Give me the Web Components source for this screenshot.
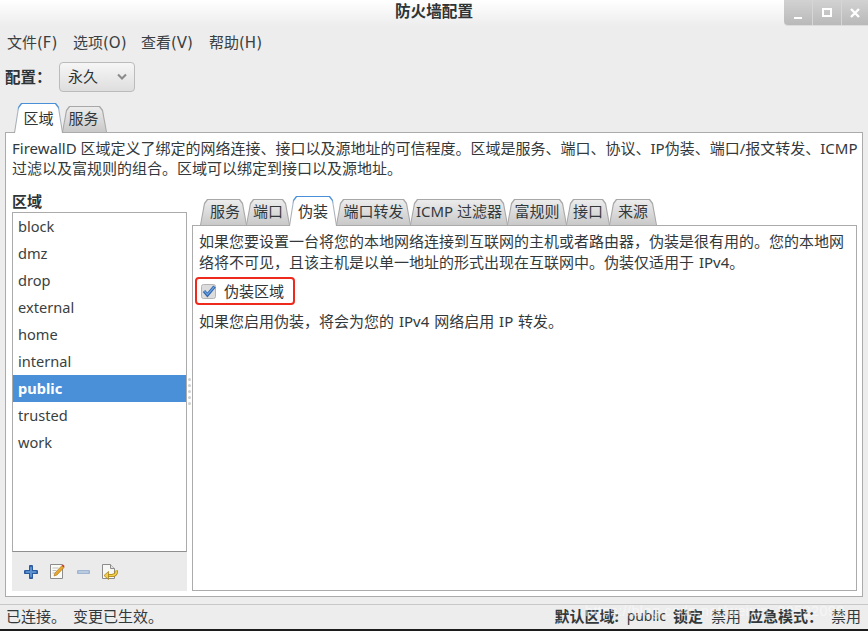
<!DOCTYPE html>
<html lang="zh">
<head>
<meta charset="utf-8">
<title>防火墙配置</title>
<style>
  html, body { margin: 0; height: 100%; overflow: hidden; }
  body {
    background: #ededed;
    color: #2e3436;
    font: 15px/20px "Noto Sans", "Noto Sans CJK SC", sans-serif;
  }
</style>
</head>
<body>
<fw-window>
  <fw-titlebar slot="title">防火墙配置</fw-titlebar>
  <fw-menubar slot="menu">
    <fw-menu style="width:66px">文件(F)</fw-menu>
    <fw-menu style="width:68px">选项(O)</fw-menu>
    <fw-menu style="width:68px">查看(V)</fw-menu>
    <fw-menu>帮助(H)</fw-menu>
  </fw-menubar>
  <fw-config slot="config" label="配置：" value="永久"></fw-config>

  <fw-tabrow slot="tabs" inset="9">
    <fw-tab active style="width:49px">区域</fw-tab>
    <fw-tab style="width:45px;margin-left:-1px;padding-right:2px">服务</fw-tab>
  </fw-tabrow>

  <fw-panel slot="panel">
    <fw-text slot="desc">FirewallD 区域定义了绑定的网络连接、接口以及源地址的可信程度。区域是服务、端口、协议、IP伪装、端口/报文转发、ICMP<br>过滤以及富规则的组合。区域可以绑定到接口以及源地址。</fw-text>

    <fw-zones slot="zones" heading="区域">
      <fw-zone>block</fw-zone>
      <fw-zone>dmz</fw-zone>
      <fw-zone>drop</fw-zone>
      <fw-zone>external</fw-zone>
      <fw-zone>home</fw-zone>
      <fw-zone>internal</fw-zone>
      <fw-zone selected>public</fw-zone>
      <fw-zone>trusted</fw-zone>
      <fw-zone>work</fw-zone>
      <fw-zone-tools slot="tools"></fw-zone-tools>
    </fw-zones>

    <fw-notebook slot="detail">
      <fw-tabrow slot="tabs" inset="8">
        <fw-tab style="width:47px;padding-left:3px">服务</fw-tab>
        <fw-tab style="width:44px;margin-left:-1px">端口</fw-tab>
        <fw-tab active style="width:48px;margin-left:-1px">伪装</fw-tab>
        <fw-tab style="width:75px;margin-left:-1px">端口转发</fw-tab>
        <fw-tab style="width:98px;margin-left:-1px">ICMP 过滤器</fw-tab>
        <fw-tab style="width:60px;margin-left:-1px">富规则</fw-tab>
        <fw-tab style="width:44px;margin-left:-1px">接口</fw-tab>
        <fw-tab style="width:48px;margin-left:-1px">来源</fw-tab>
      </fw-tabrow>
      <p>如果您要设置一台将您的本地网络连接到互联网的主机或者路由器，伪装是很有用的。您的本地网<br>络将不可见，且该主机是以单一地址的形式出现在互联网中。伪装仅适用于 IPv4。</p>
      <fw-check>伪装区域</fw-check>
      <p class="after">如果您启用伪装，将会为您的 IPv4 网络启用 IP 转发。</p>
    </fw-notebook>
  </fw-panel>

  <fw-status slot="status">
    <span>已连接。 变更已生效。</span>
    <fw-status-item slot="right" name="默认区域:" value="public" latin></fw-status-item>
    <fw-status-item slot="right" name="锁定" value="禁用"></fw-status-item>
    <fw-status-item slot="right" name="应急模式：" value="禁用"></fw-status-item>
  </fw-status>
</fw-window>

<script>
  // small helper so every element below is just a template + a define
  function comp(name, html, extra) {
    const tpl = document.createElement('template');
    tpl.innerHTML = html;
    const cls = class extends HTMLElement {
      constructor() {
        super();
        this.attachShadow({ mode: 'open' }).appendChild(tpl.content.cloneNode(true));
      }
      connectedCallback() {
        if (extra) extra.call(this, this.shadowRoot);
      }
    };
    customElements.define(name, cls);
  }

  comp('fw-window', `
    <style>
      :host { display: flex; flex-direction: column; height: 631px; box-sizing: border-box; border-bottom: 2px solid #1c1c1c; }
      .tabs { margin: 7px 5px 0; height: 29px; }
      .panel { flex: 1; min-height: 0; display: flex; margin: 0 5px 7px; }
    </style>
    <slot name="title"></slot>
    <slot name="menu"></slot>
    <slot name="config"></slot>
    <div class="tabs"><slot name="tabs"></slot></div>
    <div class="panel"><slot name="panel"></slot></div>
    <slot name="status"></slot>
  `);

  comp('fw-titlebar', `
    <style>
      :host { display: grid; grid-template-columns: 1fr auto 1fr; height: 26px; background: linear-gradient(#fff, #f6f6f6 50%, #ededed); }
      .t { grid-column: 2; font-size: 15.6px; font-weight: 700; line-height: 23px; }
      .btns { grid-column: 3; justify-self: end; display: flex; height: 25px; border-bottom-left-radius: 4px; overflow: hidden; background: linear-gradient(#d2d2d2, #b9b9b9); box-shadow: 0 1px 0 #dcdcdc; }
      .b { width: 28px; display: flex; align-items: center; justify-content: center; border-left: 1px solid #d6d6d6; }
      .b:first-child { border-left: 0; }
      svg { width: 12px; height: 12px; }
    </style>
    <div class="t"><slot></slot></div>
    <div class="btns">
      <div class="b"><svg viewBox="0 0 12 12"><rect x="2" y="10" width="8" height="2" fill="#fff"/></svg></div>
      <div class="b"><svg viewBox="0 0 12 12"><rect x="2" y="2" width="8" height="7" fill="none" stroke="#fff" stroke-width="2"/></svg></div>
      <div class="b" style="width:26px"><svg viewBox="0 0 12 12"><path d="M2 2l8 8M10 2l-8 8" stroke="#fff" stroke-width="2.4"/></svg></div>
    </div>
  `);

  comp('fw-menubar', `
    <style>:host { display: flex; height: 32px; box-sizing: border-box; padding: 2px 0 0 7px; align-items: center; }</style>
    <slot></slot>
  `);

  comp('fw-menu', `
    <style>:host { display: block; color: #3a3f41; white-space: nowrap; font-family: "DejaVu Sans", "Noto Sans CJK SC", sans-serif; }</style>
    <slot></slot>
  `);

  comp('fw-config', `
    <style>
      :host { display: flex; align-items: center; height: 34px; padding: 2px 0 2px 5px; box-sizing: content-box; }
      b { width: 54px; font-weight: 700; font-size: 15.5px; font-family: "Noto Sans CJK TC", sans-serif; padding-bottom: 3px; }
      .combo { width: 76px; height: 30px; box-sizing: border-box; border: 1px solid #bbb; border-radius: 4px; background: linear-gradient(#f6f6f6, #dedede); display: flex; align-items: center; justify-content: space-between; padding: 0 6px 0 8px; }
      span { padding-bottom: 3px; }
      svg { width: 12px; height: 8px; }
    </style>
    <b></b>
    <div class="combo"><span></span>
      <svg viewBox="0 0 12 8"><path d="M2 1.5l4 4 4-4" fill="none" stroke="#8a8a8a" stroke-width="2"/></svg>
    </div>
  `, function (root) {
    root.querySelector('b').textContent = this.getAttribute('label');
    root.querySelector('span').textContent = this.getAttribute('value');
  });

  comp('fw-tabrow', `
    <style>
      :host { display: flex; align-items: flex-end; height: 29px; position: relative; z-index: 1; }
    </style>
    <slot></slot>
  `, function () {
    this.style.paddingLeft = this.getAttribute('inset') + 'px';
  });

  comp('fw-tab', `
    <style>
      :host { display: block; position: relative; flex: none; height: 26px; box-sizing: border-box; text-align: center; line-height: 25px; white-space: nowrap; color: #33393b; }
      :host([active]) { height: 30px; margin-bottom: -1px; line-height: 30px; z-index: 2; color: #2e3436; }
      .edge, .fill { position: absolute; z-index: -1; clip-path: polygon(0 100%, 4px 4px, 7px 0, calc(100% - 7px) 0, calc(100% - 4px) 4px, 100% 100%); }
      .edge { inset: 0; background: #a8a8a8; }
      .fill { inset: 1px 1px 0; background: linear-gradient(#ececec, #c9c9c9); }
      :host([active]) .edge { background: linear-gradient(#4a90d9 0, #4a90d9 3px, #a8b8c8 8px, #a8a8a8 100%); }
      :host([active]) .fill { background: #fff; }
    </style>
    <div class="edge"></div><div class="fill"></div>
    <slot></slot>
  `);

  comp('fw-panel', `
    <style>
      :host { display: flex; flex-direction: column; flex: 1; min-width: 0; border: 1px solid #ababab; background: #fff; padding: 5px 5px 5px 6px; }
      .desc { height: 54px; flex: none; }
      .split { flex: 1; min-height: 0; display: flex; }
      .grip { width: 5px; flex: none; display: flex; flex-direction: column; align-items: center; justify-content: center; gap: 3px; }
      .grip i { width: 3px; height: 3px; border-radius: 50%; background: #cfcfcf; }
    </style>
    <div class="desc"><slot name="desc"></slot></div>
    <div class="split">
      <slot name="zones"></slot>
      <div class="grip"><i></i><i></i><i></i><i></i><i></i></div>
      <slot name="detail"></slot>
    </div>
  `);

  comp('fw-text', `
    <style>:host { display: block; line-height: 20px; white-space: nowrap; color: #33393b; }</style>
    <slot></slot>
  `);

  comp('fw-zones', `
    <style>
      :host { display: flex; flex-direction: column; width: 175px; flex: none; }
      h4 { margin: 0; height: 20px; font-size: 15px; line-height: 18px; font-weight: 700; }
      .list { flex: 1; min-height: 0; border: 1px solid #ababab; border-bottom-color: #8f8f8f; }
    </style>
    <h4></h4>
    <div class="list"><slot></slot></div>
    <slot name="tools"></slot>
  `, function (root) {
    root.querySelector('h4').textContent = this.getAttribute('heading');
  });

  comp('fw-zone', `
    <style>
      :host { display: block; height: 27px; line-height: 27px; padding-left: 5px; color: #3a3f41; font-size: 14.6px; }
      :host([selected]) { background: #4a90d9; color: #fff; font-weight: 700; }
    </style>
    <slot></slot>
  `);

  comp('fw-zone-tools', `
    <style>
      :host { display: flex; align-items: center; height: 39px; flex: none; background: #ebebeb; padding-left: 12px; gap: 11px; }
      svg { display: block; flex: none; }
    </style>
    <svg width="14" height="14" viewBox="0 0 14 14"><path d="M7 1.5v11M1.5 7h11" stroke="#2a5a9c" stroke-width="4" stroke-linecap="round"/><path d="M7 2.5v9M2.5 7h9" stroke="#5a8fd0" stroke-width="2" stroke-linecap="round"/></svg>
    <svg width="16" height="17" viewBox="0 0 16 17"><path d="M1.5 1.5h12v14h-12z" fill="#fbfbf6" stroke="#8c8c8c"/><path d="M3.5 5h6M3.5 7.5h4M3.5 10h3" stroke="#bdbdbd"/><path d="M5 13l1-3 7-7.5 2 2-7 7.5z" fill="#e8a62c" stroke="#a8701a" stroke-width=".6"/><path d="M13 2.5l1-1 1.6 1.6-1 1.4z" fill="#d3352c"/></svg>
    <svg width="13" height="14" viewBox="0 0 13 14" style="margin-left:1px"><path d="M1.5 7h10" stroke="#9fb5d2" stroke-width="4" stroke-linecap="round"/><path d="M2 7h9" stroke="#c4d2e4" stroke-width="1.4" stroke-linecap="round"/></svg>
    <svg width="17" height="17" viewBox="0 0 17 17"><path d="M1.5 1.5h8l4 4v10h-12z" fill="#f7f7f3" stroke="#8c8c8c"/><path d="M9.5 1.5v4h4" fill="#e2e2de" stroke="#8c8c8c"/><path d="M15 7.5c1 3-1 5-4 5H6" fill="none" stroke="#a8811a" stroke-width="3.2"/><path d="M15 7.5c1 3-1 5-4 5H6" fill="none" stroke="#f2cf4a" stroke-width="1.6"/><path d="M7.5 8.5L3 12.5l4.5 4z" fill="#f2cf4a" stroke="#a8811a" stroke-width=".8"/></svg>
  `);

  comp('fw-notebook', `
    <style>
      :host { display: flex; flex-direction: column; flex: 1; min-width: 0; padding-top: 4px; }
      .body { flex: 1; border: 1px solid #ababab; padding: 5px 6px; min-height: 0; }
      ::slotted(p) { margin: 0; line-height: 21px; white-space: nowrap; color: #33393b; word-spacing: 1px; }
      ::slotted(p.after) { margin-top: 6px; }
    </style>
    <slot name="tabs"></slot>
    <div class="body"><slot></slot></div>
  `);

  comp('fw-check', `
    <style>
      :host { display: flex; align-items: center; width: 100px; height: 28px; box-sizing: border-box; margin: 4px 0 0 -4px; padding-left: 4px; gap: 8px; border: 2px solid #ee2a1c; border-radius: 4px; white-space: nowrap; }
      svg { display: block; flex: none; }
    </style>
    <svg width="15" height="15" viewBox="0 0 15 15">
      <rect x=".5" y=".5" width="14" height="14" rx="2" fill="#dcdcdc" stroke="#b4b4b4"/>
      <path d="M3 7l3.4 4L13.5 2.5" fill="none" stroke="#2f66ad" stroke-width="3.2"/>
      <path d="M3.4 7.2l3 3.4 6.6-7.6" fill="none" stroke="#6ea3e0" stroke-width="1.2"/>
    </svg>
    <span><slot></slot></span>
  `);

  comp('fw-status', `
    <style>
      :host { display: flex; justify-content: space-between; align-items: center; height: 25px; box-sizing: border-box; padding: 0 7px 2px 6px; flex: none; border-top: 1px solid #c8c8c8; position: relative; color: #33393b; white-space: nowrap; word-spacing: 3px; }
      .right { display: flex; gap: 7px; }
      .mark { position: absolute; left: 585px; top: -2px; font-size: 14.4px; line-height: 16px; letter-spacing: .4px; word-spacing: 0; color: rgba(255,255,255,.5); pointer-events: none; font-family: "Liberation Sans", sans-serif; }
    </style>
    <slot></slot>
    <div class="right"><slot name="right"></slot></div>
    <div class="mark">https://blog.csdn.net/weixin_39522099</div>
  `);

  comp('fw-status-item', `
    <style>
      :host { display: flex; gap: 8px; font-family: "Noto Sans", "Noto Sans CJK TC", sans-serif; }
      b { font-weight: 700; }
      :host([latin]) span { font-size: 14px; letter-spacing: -.1px; }
    </style>
    <b></b><span></span>
  `, function (root) {
    root.querySelector('b').textContent = this.getAttribute('name');
    root.querySelector('span').textContent = this.getAttribute('value');
  });
</script>
</body>
</html>
